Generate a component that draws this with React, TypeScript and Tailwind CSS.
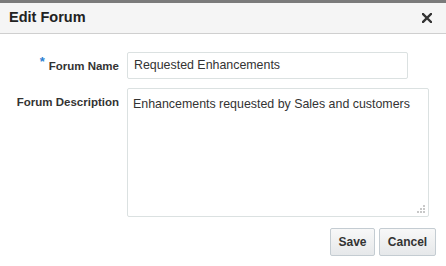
import React from "react";

export default function App() {
  const font = { fontFamily: '"Liberation Sans", Arial, sans-serif' };
  return (
    <div className="w-[446px] h-[266px] bg-white overflow-hidden" style={font}>
      <div className="h-[3px] bg-[#7b7b7b]" />
      <div className="h-[31px] bg-[#f5f5f5] border-b border-[#cfcfcf] flex items-center justify-between pl-[9px] pr-[14px]">
        <span className="text-[14.5px] font-bold text-[#222]">Edit Forum</span>
        <svg width="10" height="10" viewBox="0 0 10 10">
          <path d="M1 1 L9 9 M9 1 L1 9" stroke="#333" strokeWidth="2.4" strokeLinecap="square" />
        </svg>
      </div>
      <div className="pt-[18px]">
        <div className="flex items-center">
          <div className="w-[119px] text-right text-[11.5px] font-bold text-[#333] leading-none">
            <span className="text-[#2d7fd2] text-[13px] relative top-[-4px] mr-[4px]">*</span>
            Forum Name
          </div>
          <div className="ml-[8px] w-[281px] h-[27px] border border-[#dbe1e1] rounded-[2px] flex items-center px-[6px] text-[12.4px] text-[#333] whitespace-nowrap">
            Requested Enhancements
          </div>
        </div>
        <div className="flex items-start mt-[9px]">
          <div className="w-[119px] text-right text-[11.5px] font-bold text-[#333] leading-none pt-[9px]">
            Forum Description
          </div>
          <div className="relative ml-[8px] w-[302px] h-[129px] border border-[#dbe1e1] rounded-[2px] px-[5px] pt-[7px] text-[12.4px] text-[#333] leading-[16px] whitespace-nowrap">
            Enhancements requested by Sales and customers
            <svg className="absolute right-[2px] bottom-[2px]" width="10" height="10" viewBox="0 0 10 10">
              <rect x="7" y="1" width="2" height="2" fill="#c8c8c8" />
              <rect x="4" y="4" width="2" height="2" fill="#c8c8c8" />
              <rect x="7" y="4" width="2" height="2" fill="#c8c8c8" />
              <rect x="1" y="7" width="2" height="2" fill="#c8c8c8" />
              <rect x="4" y="7" width="2" height="2" fill="#c8c8c8" />
              <rect x="7" y="7" width="2" height="2" fill="#c8c8c8" />
            </svg>
          </div>
        </div>
        <div className="flex justify-end gap-[4px] mt-[11px] pr-[10px]">
          <button className="w-[45px] h-[28px] border border-[#c4ccd2] rounded-[2px] bg-gradient-to-b from-[#f8f8f8] to-[#e6e8ea] text-[12px] font-bold text-[#333]">
            Save
          </button>
          <button className="w-[57px] h-[28px] border border-[#c4ccd2] rounded-[2px] bg-gradient-to-b from-[#f8f8f8] to-[#e6e8ea] text-[12px] font-bold text-[#333]">
            Cancel
          </button>
        </div>
      </div>
    </div>
  );
}
